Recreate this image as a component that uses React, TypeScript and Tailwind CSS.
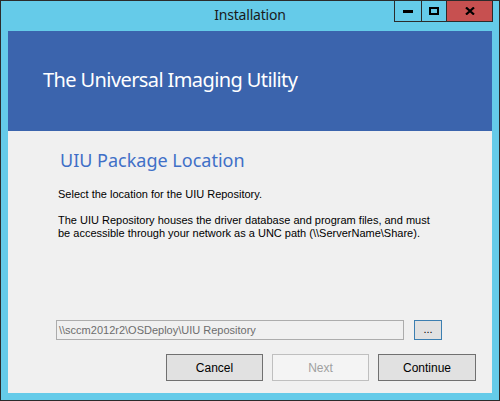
import React from 'react';

const ui = { fontFamily: '"Segoe UI", "Noto Sans", "Open Sans", sans-serif' };
const sys = { fontFamily: '"Liberation Sans", Arial, sans-serif' };

function CaptionButtons() {
  return (
    <div className="absolute top-[-1px] right-[6px] flex h-[22px] border border-[#2b2b2b]">
      <div className="w-[27px] flex items-center justify-center border-r border-[#2b2b2b]">
        <svg width="10" height="3" viewBox="0 0 10 3">
          <rect width="10" height="3" fill="#000" />
        </svg>
      </div>
      <div className="w-[25px] flex items-center justify-center border-r border-[#2b2b2b]">
        <svg width="10" height="8" viewBox="0 0 10 8">
          <rect x="1" y="1" width="8" height="6" fill="none" stroke="#000" strokeWidth="2" />
        </svg>
      </div>
      <div className="w-[45px] flex items-center justify-center bg-[#c75050]">
        <svg width="10" height="8" viewBox="0 0 10 8">
          <path d="M1 0.5 L9 7.5 M9 0.5 L1 7.5" stroke="#000" strokeWidth="2.2" />
        </svg>
      </div>
    </div>
  );
}

export default function App() {
  return (
    <div className="w-[500px] h-[401px] bg-[#65cbe9] border border-[#2b2b2b] relative flex flex-col">
      {/* Title bar */}
      <div className="h-[30px] flex items-center justify-center pb-[4px]">
        <span className="text-[14px] tracking-[-0.2px] text-[#1a1a1a]" style={ui}>Installation</span>
      </div>
      <CaptionButtons />

      {/* Client area */}
      <div className="mx-[7px] h-[362px] bg-[#f0f0f0] flex flex-col">
        <div className="h-[100px] bg-[#3b64ad] flex items-center pl-[35px] pb-[2px]">
          <h1 className="text-[20px] tracking-[-0.6px] text-white" style={ui}>The Universal Imaging Utility</h1>
        </div>

        <div className="flex flex-col pl-[50px] pt-[16px]">
          <h2 className="text-[18px] leading-[26px] text-[#3f6fc7] pl-[2px]" style={ui}>UIU Package Location</h2>
          <p className="text-[11px] leading-[13px] text-black mt-[15px]" style={sys}>
            Select the location for the UIU Repository.
          </p>
          <p className="text-[11px] leading-[13px] text-black mt-[13px]" style={sys}>
            The UIU Repository houses the driver database and program files, and must
            <br />
            be accessible through your network as a UNC path (\\ServerName\Share).
          </p>
        </div>

        <div className="flex-1" />

        <div className="flex items-center pl-[48px] gap-[10px]">
          <div
            className="w-[348px] h-[20px] border border-[#acacac] bg-[#f0f0f0] flex items-center pl-[2px] text-[11px] text-[#6d6d6d]"
            style={sys}
          >
            \\sccm2012r2\OSDeploy\UIU Repository
          </div>
          <button
            className="w-[28px] h-[20px] border border-[#3c7fb1] bg-[#e1e1e1] text-[11px] text-black flex items-center justify-center pb-[2px]"
            style={sys}
          >
            ...
          </button>
        </div>

        <div className="flex justify-end gap-[9px] pr-[16px] mt-[14px] mb-[12px]">
          <button className="w-[97px] h-[27px] border border-[#707070] bg-[#e1e1e1] text-[12px] text-black" style={sys}>
            Cancel
          </button>
          <button className="w-[97px] h-[27px] border border-[#bfbfbf] bg-[#f4f4f4] text-[12px] text-[#a0a0a0]" style={sys}>
            Next
          </button>
          <button className="w-[98px] h-[27px] border border-[#707070] bg-[#e1e1e1] text-[12px] text-black" style={sys}>
            Continue
          </button>
        </div>
      </div>
    </div>
  );
}
